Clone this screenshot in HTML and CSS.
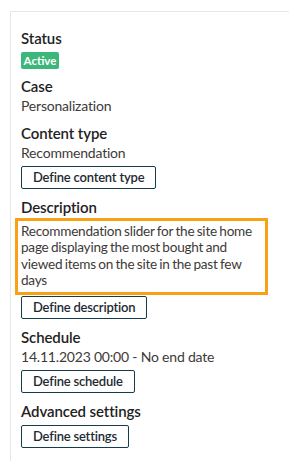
FILE: index.html
```html
<!DOCTYPE html>
<html lang="en">
<head>
<meta charset="utf-8">
<title>Campaign details</title>
<link rel="stylesheet" href="styles.css">
</head>
<body>
<section class="card">
  <div class="field">
    <div class="label">Status</div>
    <span class="badge">Active</span>
  </div>
  <div class="field">
    <div class="label">Case</div>
    <div class="value">Personalization</div>
  </div>
  <div class="field">
    <div class="label">Content type</div>
    <div class="value">Recommendation</div>
    <button class="btn" type="button">Define content type</button>
  </div>
  <div class="field">
    <div class="label">Description</div>
    <div class="desc">Recommendation slider for the site home<br>page displaying the most bought and<br>viewed items on the site in the past few<br>days</div>
    <button class="btn btn-tight" type="button">Define description</button>
  </div>
  <div class="field">
    <div class="label">Schedule</div>
    <div class="value">14.11.2023 00:00 - No end date</div>
    <button class="btn" type="button">Define schedule</button>
  </div>
  <div class="field">
    <div class="label">Advanced settings</div>
    <button class="btn" type="button">Define settings</button>
  </div>
</section>
</body>
</html>
```

FILE: styles.css
```css
* { box-sizing: border-box; }
html, body { background: #ffffff; }
body {
  margin: 11px 11px 0 10px;
  font-family: Lato, "Liberation Sans", sans-serif;
  color: #222222;
}
.card {
  width: 280px;
  min-height: 470px;
  border: 1px solid #e6e6e6;
  border-bottom: none;
  padding: 16px 10px 0 10px;
  display: flex;
  flex-direction: column;
  gap: 8px;
}
.field {
  display: flex;
  flex-direction: column;
  align-items: flex-start;
}
.label {
  font-size: 15px;
  line-height: 20px;
  font-weight: 600;
  color: #222222;
  letter-spacing: -0.1px;
}
.value {
  font-size: 14px;
  line-height: 19px;
  color: #3d3a38;
  letter-spacing: -0.2px;
}
.badge {
  margin-top: 4px;
  height: 17px;
  width: 38px;
  display: inline-flex;
  align-items: center;
  justify-content: center;
  background: #3bb77b;
  color: #ffffff;
  font-size: 11.5px;
  font-weight: 700;
  border-radius: 2px;
  margin-bottom: -1px;
}
.desc {
  margin-top: 1px;
  margin-left: -6px;
  width: 253px;
  border: 3px solid #f8a114;
  padding: 2px 3px 4px 3px;
  font-size: 13.6px;
  line-height: 16.3px;
  color: #3d3a38;
  letter-spacing: -0.25px;
  word-spacing: -0.8px;
  white-space: nowrap;
  overflow: hidden;
}
.btn {
  margin-top: 4px;
  height: 23px;
  padding: 0 11px;
  border: 1px solid #163b4a;
  border-radius: 2px;
  background: #ffffff;
  font-family: Lato, "Liberation Sans", sans-serif;
  font-size: 13px;
  font-weight: 600;
  color: #1e2a33;
  line-height: 21px;
  letter-spacing: -0.2px;
}
.btn-tight { margin-top: 1px; }
```
